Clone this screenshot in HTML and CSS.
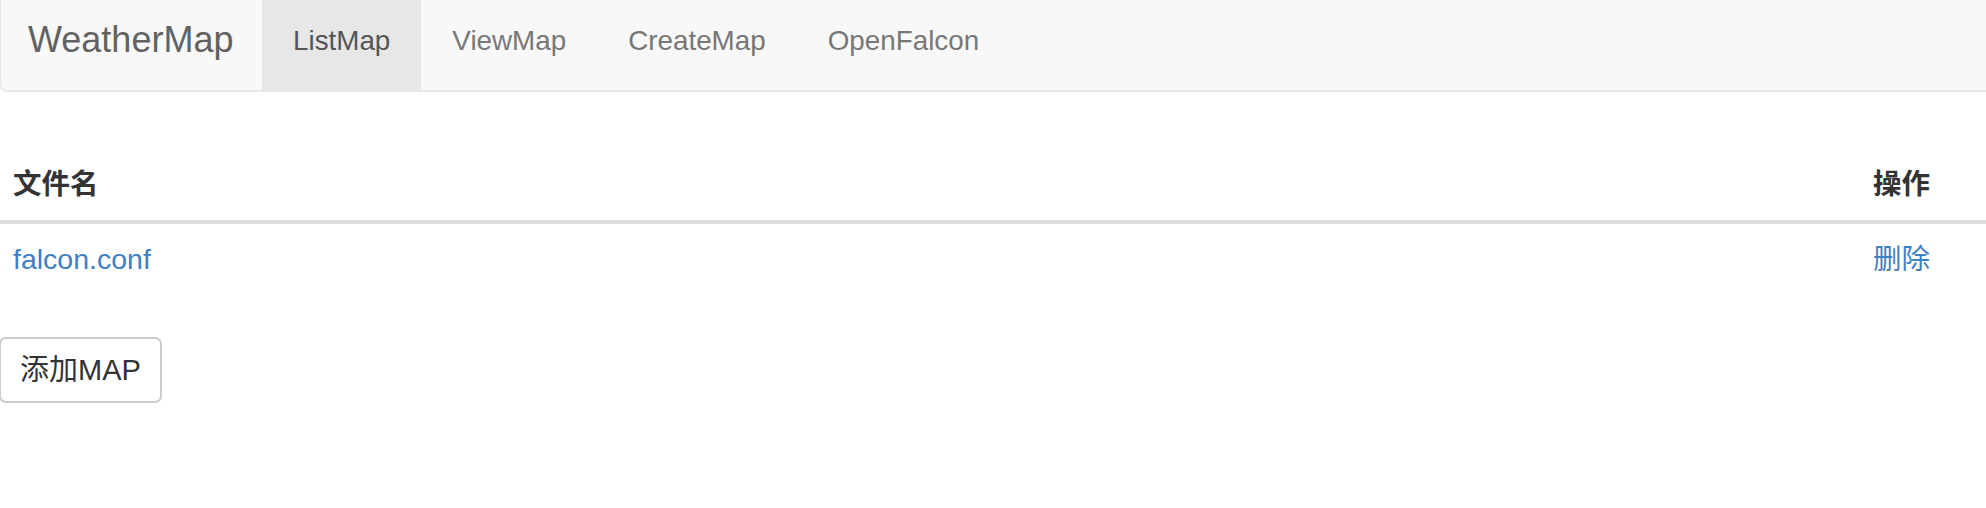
FILE: index.html
```html
<!DOCTYPE html>
<html lang="zh-CN">
<head>
<meta charset="utf-8">
<title>WeatherMap</title>
<link rel="stylesheet" href="styles.css">
</head>
<body>
<nav class="navbar">
  <a class="brand" href="#">WeatherMap</a>
  <ul class="nav">
    <li class="nav-item active"><a href="#">ListMap</a></li>
    <li class="nav-item"><a href="#">ViewMap</a></li>
    <li class="nav-item"><a href="#">CreateMap</a></li>
    <li class="nav-item"><a href="#">OpenFalcon</a></li>
  </ul>
</nav>
<main class="content">
  <table class="table">
    <thead>
      <tr><th>文件名</th><th class="col-op">操作</th></tr>
    </thead>
    <tbody>
      <tr><td><a class="link" href="#">falcon.conf</a></td><td class="col-op"><a class="link" href="#">删除</a></td></tr>
    </tbody>
  </table>
  <button class="btn" type="button">添加MAP</button>
</main>
</body>
</html>
```

FILE: styles.css
```css
html, body {
  margin: 0;
  padding: 0;
  background: #ffffff;
}
body {
  font-family: "Liberation Sans", Arial, "Noto Sans CJK SC", sans-serif;
  font-size: 29px;
  color: #333333;
}
a {
  text-decoration: none;
}
.navbar {
  display: flex;
  align-items: stretch;
  height: 92px;
  box-sizing: border-box;
  background: #f8f8f8;
  border-left: 1px solid #e7e7e7;
  border-bottom: 2px solid #e7e7e7;
  border-bottom-left-radius: 7px;
}
.brand {
  display: block;
  width: 261px;
  box-sizing: border-box;
  padding-left: 27px;
  font-size: 36px;
  line-height: 79px;
  color: #626262;
}
.nav {
  display: flex;
  list-style: none;
  margin: 0;
  padding: 0;
}
.nav-item a {
  display: block;
  height: 90px;
  padding: 0 31px;
  font-size: 27.8px;
  line-height: 82px;
  color: #777777;
}
.nav-item.active a {
  background: #e7e7e7;
  color: #555555;
}
.content {
  padding-top: 56px;
}
.table {
  width: calc(100% + 1px);
  margin-left: -1px;
  border-collapse: collapse;
  font-size: 28.5px;
}
.table th {
  text-align: left;
  font-weight: bold;
  height: 72px;
  line-height: 40px;
  padding: 0 14px;
  border-bottom: 4px solid #dddddd;
  vertical-align: middle;
}
.table td {
  height: 70px;
  line-height: 40px;
  padding: 0 14px;
  vertical-align: middle;
}
.table .col-op {
  width: 99px;
}
.link {
  color: #3f80c2;
}
.btn {
  display: block;
  margin: 43px 0 0 -1px;
  height: 66px;
  box-sizing: border-box;
  padding: 0 19px;
  font-family: "Liberation Sans", Arial, "Noto Sans CJK SC", sans-serif;
  font-size: 29px;
  line-height: 62px;
  color: #333333;
  background: #ffffff;
  border: 2px solid #cccccc;
  border-radius: 7px;
}
```
